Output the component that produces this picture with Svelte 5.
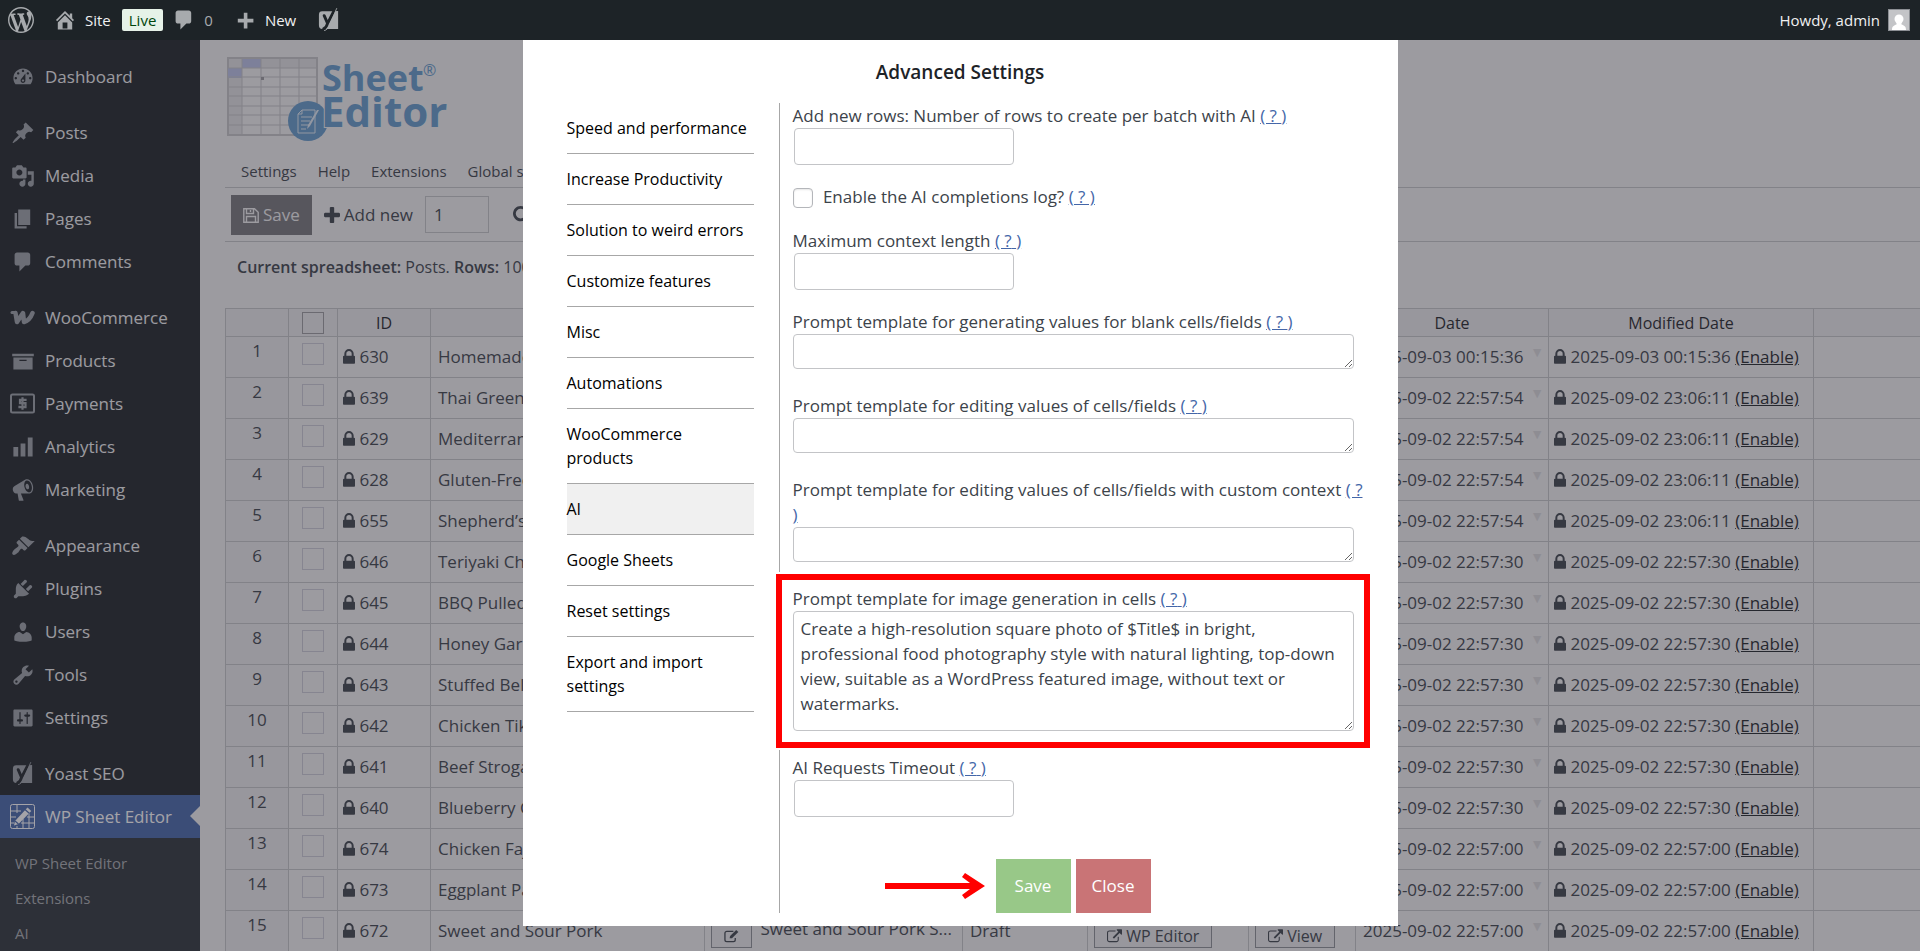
<script>
  const icons = {
    wordpress: 'M20 10c0-5.51-4.49-10-10-10C4.48 0 0 4.49 0 10c0 5.52 4.48 10 10 10 5.51 0 10-4.48 10-10zM7.78 15.37L4.37 6.22c.55-.02 1.17-.08 1.17-.08.5-.06.44-1.13-.06-1.11 0 0-1.45.11-2.37.11-.18 0-.37 0-.58-.01C4.12 2.69 6.87 1.11 10 1.11c2.33 0 4.45.87 6.05 2.34-.68-.11-1.65.39-1.65 1.58 0 .74.45 1.36.9 2.1.35.61.55 1.36.55 2.46 0 1.49-1.4 5-1.4 5l-3.03-8.37c.54-.02.82-.17.82-.17.5-.05.44-1.25-.06-1.22 0 0-1.44.12-2.38.12-.87 0-2.33-.12-2.33-.12-.5-.03-.56 1.2-.06 1.22l.92.08 1.26 3.41zM17.41 10c.24-.64.74-1.87.43-4.25.7 1.29 1.05 2.71 1.05 4.25 0 3.29-1.73 6.24-4.4 7.78.97-2.59 1.94-5.2 2.92-7.78zM6.1 18.09C3.12 16.65 1.11 13.53 1.11 10c0-1.3.23-2.48.72-3.59C3.25 10.3 4.67 14.2 6.1 18.09zm4.03-6.63l2.58 6.98c-.86.29-1.76.45-2.71.45-.79 0-1.57-.11-2.29-.33.81-2.38 1.62-4.74 2.42-7.1z',
    home: 'M16 8.5l1.53 1.53-1.06 1.06L10 4.6l-6.47 6.49-1.06-1.06L10 2.5l4 4v-2h2v4zm-6-2.46l6 5.99V18H4v-5.97zM12 17v-5H8v5h4z',
    comments: 'M5 2h9c1.1 0 2 .9 2 2v7c0 1.1-.9 2-2 2h-2l-5 5v-5H5c-1.1 0-2-.9-2-2V4c0-1.1.9-2 2-2z',
    plus: 'M17 9v3h-5v5H9v-5H4V9h5V4h3v5h5z',
    dashboard: 'M3.76 16h12.48c1.1-1.37 1.76-3.11 1.76-5 0-4.42-3.58-8-8-8s-8 3.58-8 8c0 1.89.66 3.63 1.76 5zM10 4c.55 0 1 .45 1 1s-.45 1-1 1-1-.45-1-1 .45-1 1-1zM6 6c.55 0 1 .45 1 1s-.45 1-1 1-1-.45-1-1 .45-1 1-1zm8 0c.55 0 1 .45 1 1s-.45 1-1 1-1-.45-1-1 .45-1 1-1zm-5.37 5.55L12 7v6c0 1.1-.9 2-2 2s-2-.9-2-2c0-.57.24-1.08.63-1.45zM4 10c.55 0 1 .45 1 1s-.45 1-1 1-1-.45-1-1 .45-1 1-1zm12 0c.55 0 1 .45 1 1s-.45 1-1 1-1-.45-1-1 .45-1 1-1zm-5 3c0-.55-.45-1-1-1s-1 .45-1 1 .45 1 1 1 1-.45 1-1z',
    post: 'M10.44 3.02l1.82-1.82 6.36 6.35-1.83 1.82c-1.05-.68-2.48-.57-3.41.36l-.75.75c-.92.93-1.04 2.35-.35 3.41l-1.83 1.82-2.41-2.41-2.8 2.79c-.42.42-3.38 2.71-3.8 2.29s1.86-3.39 2.28-3.81l2.79-2.79L4.1 9.36l1.83-1.82c1.05.69 2.48.57 3.4-.36l.75-.75c.93-.92 1.05-2.35.36-3.41z',
    media: 'M13 11V4c0-.55-.45-1-1-1h-1.67L9 1H5L3.67 3H2c-.55 0-1 .45-1 1v7c0 .55.45 1 1 1h10c.55 0 1-.45 1-1zM7 4.5c1.38 0 2.5 1.12 2.5 2.5S8.38 9.5 7 9.5 4.5 8.38 4.5 7 5.62 4.5 7 4.5zM14 6h5v10.5c0 1.38-1.12 2.5-2.5 2.5S14 17.88 14 16.5s1.12-2.5 2.5-2.5c.17 0 .34.02.5.05V9h-3V6zm-4 8.05V13h2v3.5c0 1.38-1.12 2.5-2.5 2.5S7 17.88 7 16.5 8.12 14 9.5 14c.17 0 .34.02.5.05z',
    page: 'M6 15V2h10v13H6zm-1 1h8v2H3V5h2v11z',
    archive: 'M19 4v2H1V4h18zM2 7h16v10H2V7zm11 3V9H7v1h6z',
    chart: 'M18 18V2h-4v16h4zm-6 0V7H8v11h4zm-6 0v-8H2v8h4z',
    megaphone: 'M18.15 5.94c.46 1.62.38 3.22-.02 4.48-.42 1.28-1.26 2.18-2.3 2.48-.16.06-.26.06-.4.06-.06.02-.12.02-.18.02-.06.02-.14.02-.22.02h-6.8l2.22 5.5c.02.14-.06.26-.14.34-.08.1-.24.16-.34.16H6.95c-.1 0-.26-.06-.34-.16-.08-.08-.16-.2-.14-.34l-1-5.5H4.25l-.02-.02c-.5.06-1.08-.18-1.54-.62s-.88-1.08-1.06-1.88c-.24-.8-.2-1.56-.02-2.2.18-.62.58-1.08 1.06-1.3l.02-.02 9-5.4c.1-.06.18-.1.24-.16.06-.04.14-.08.24-.12.16-.08.28-.12.5-.18 1.04-.3 2.24.1 3.22.98s1.84 2.24 2.26 3.86zm-2.58 5.98h-.02c.4-.1.74-.34 1.04-.7.58-.7.86-1.76.86-3.04 0-.64-.1-1.3-.28-1.98-.34-1.36-1.02-2.5-1.78-3.24s-1.68-1.1-2.46-.88c-.82.22-1.4.96-1.7 2-.32 1.04-.28 2.36.06 3.72.38 1.36 1 2.5 1.8 3.24.78.74 1.62 1.1 2.48.88zm-2.54-7.08c.22-.04.42-.02.62.04.38.16.76.48 1.02 1s.42 1.2.42 1.78c0 .3-.04.56-.12.8-.18.48-.44.84-.86.94-.34.1-.8-.06-1.14-.4s-.64-.86-.78-1.5c-.18-.62-.12-1.24.02-1.72s.48-.84.82-.94z',
    appearance: 'M14.48 11.06L7.41 3.99l1.5-1.5c.5-.56 2.3-.47 3.51.32 1.21.8 1.43 1.28 2.91 2.1 1.18.64 2.45 1.26 4.45.85zm-.71.71L6.7 4.7 4.93 6.47c-.39.39-.39 1.02 0 1.41l1.06 1.06c.39.39.39 1.03 0 1.42-.6.6-1.43 1.11-2.21 1.69-.35.26-.7.53-1.01.84C1.43 14.23.4 16.08 1.4 17.07c.99 1 2.84-.03 4.18-1.36.31-.31.58-.66.85-1.02.57-.78 1.08-1.61 1.69-2.21.39-.39 1.02-.39 1.41 0l1.06 1.06c.39.39 1.02.39 1.41 0z',
    plugins: 'M13.11 4.36L9.87 7.6 8 5.73l3.24-3.24c.35-.34 1.05-.2 1.56.32.52.51.66 1.21.31 1.55zm-8 1.77l.91-1.12 9.01 9.01-1.19.84c-.71.71-2.63 1.16-3.82 1.16H6.14L4.9 17.26c-.59.59-1.54.59-2.12 0-.59-.58-.59-1.53 0-2.12l1.24-1.24v-3.88c0-1.13.4-3.19 1.09-3.89zm7.26 3.97l3.24-3.24c.34-.35 1.04-.21 1.55.31.52.51.66 1.21.31 1.55l-3.24 3.25z',
    users: 'M10 9.25c-2.27 0-2.73-3.44-2.73-3.44C7 4.02 7.82 2 9.97 2c2.16 0 2.98 2.02 2.71 3.81 0 0-.41 3.44-2.68 3.44zm0 2.57L12.72 10c2.39 0 4.52 2.33 4.52 4.53v2.49s-3.65 1.13-7.24 1.13c-3.65 0-7.24-1.13-7.24-1.13v-2.49c0-2.25 1.94-4.48 4.47-4.48z',
    tools: 'M16.68 9.77c-1.34 1.34-3.3 1.67-4.95.99l-5.41 6.52c-.99.99-2.59.99-3.58 0s-.99-2.59 0-3.57l6.52-5.42c-.68-1.65-.35-3.61.99-4.95 1.28-1.28 3.12-1.62 4.72-1.06l-2.89 2.89 2.82 2.82 2.86-2.87c.53 1.58.18 3.39-1.08 4.65zM3.81 16.21c.4.39 1.04.39 1.43 0 .4-.4.4-1.04 0-1.43-.39-.4-1.03-.4-1.43 0-.39.39-.39 1.03 0 1.43z',
    settings: 'M18 16V4c0-.55-.45-1-1-1H3c-.55 0-1 .45-1 1v12c0 .55.45 1 1 1h14c.55 0 1-.45 1-1zM8 11h1c.55 0 1 .45 1 1s-.45 1-1 1H8v1.5c0 .28-.22.5-.5.5s-.5-.22-.5-.5V13H6c-.55 0-1-.45-1-1s.45-1 1-1h1V5.5c0-.28.22-.5.5-.5s.5.22.5.5V11zm5-2h-1c-.55 0-1-.45-1-1s.45-1 1-1h1V5.5c0-.28.22-.5.5-.5s.5.22.5.5V7h1c.55 0 1 .45 1 1s-.45 1-1 1h-1v5.5c0 .28-.22.5-.5.5s-.5-.22-.5-.5V9z'
  }

  const menuGroups = [
    [['Dashboard', 'dashboard']],
    [['Posts', 'post'], ['Media', 'media'], ['Pages', 'page'], ['Comments', 'comments']],
    [['WooCommerce', 'woo'], ['Products', 'archive'], ['Payments', 'payments'], ['Analytics', 'chart'], ['Marketing', 'megaphone']],
    [['Appearance', 'appearance'], ['Plugins', 'plugins'], ['Users', 'users'], ['Tools', 'tools'], ['Settings', 'settings']],
    [['Yoast SEO', 'yoast'], ['WP Sheet Editor', 'sheet']]
  ]
  const submenu = ['WP Sheet Editor', 'Extensions', 'AI']

  const tabs = [
    'Speed and performance', 'Increase Productivity', 'Solution to weird errors', 'Customize features',
    'Misc', 'Automations', 'WooCommerce products', 'AI', 'Google Sheets', 'Reset settings',
    'Export and import settings'
  ]
  let activeTab = $state('AI')

  const fields = [
    { id: 'batch', type: 'text', label: 'Add new rows: Number of rows to create per batch with AI' },
    { id: 'log', type: 'check', label: 'Enable the AI completions log?' },
    { id: 'context', type: 'text', label: 'Maximum context length' },
    { id: 'blank', type: 'area', label: 'Prompt template for generating values for blank cells/fields' },
    { id: 'edit', type: 'area', label: 'Prompt template for editing values of cells/fields' },
    { id: 'custom', type: 'area', label: 'Prompt template for editing values of cells/fields with custom context', long: true },
    { id: 'image', type: 'area', label: 'Prompt template for image generation in cells', marked: true },
    { id: 'timeout', type: 'text', label: 'AI Requests Timeout' }
  ]
  let values = $state({
    image: 'Create a high-resolution square photo of $Title$ in bright, professional food photography style with natural lighting, top-down view, suitable as a WordPress featured image, without text or watermarks.'
  })

  const a = ['2025-09-02 22:57:54', '2025-09-02 23:06:11']
  const b = ['2025-09-02 22:57:30', '2025-09-02 22:57:30']
  const c = ['2025-09-02 22:57:00', '2025-09-02 22:57:00']
  const rows = [
    [630, 'Homemade Pizza', ['2025-09-03 00:15:36', '2025-09-03 00:15:36']],
    [639, 'Thai Green Curry', a],
    [629, 'Mediterranean Salad', a],
    [628, 'Gluten-Free Bread', a],
    [655, 'Shepherd’s Pie', a],
    [646, 'Teriyaki Chicken', b],
    [645, 'BBQ Pulled Pork', b],
    [644, 'Honey Garlic Salmon', b],
    [643, 'Stuffed Bell Peppers', b],
    [642, 'Chicken Tikka', b],
    [641, 'Beef Stroganoff', b],
    [640, 'Blueberry Cake', b],
    [674, 'Chicken Fajitas', c],
    [673, 'Eggplant Parmesan', c],
    [672, 'Sweet and Sour Pork', c]
  ]
</script>

{#snippet icon(name)}
  {#if name === 'woo'}
    <svg class="icon wide" viewBox="0 0 25 25" fill="none" stroke="currentColor" stroke-linejoin="round" stroke-linecap="round">
      <path d="M2 7.500h3" stroke-width="3" /><path d="M5.500 8l1.500 9L13 8l1 9c4-1 7-5 8.500-9" stroke-width="4.500" />
    </svg>
  {:else if name === 'payments'}
    <svg class="icon wide" viewBox="0 0 25 25" fill="none" stroke="currentColor" stroke-width="2">
      <rect x="1" y="3.500" width="23" height="18" rx="1.500" />
      <path d="M15.500 10V8.800H10v3.400h5.500v3.900H9.500v-1.300M12.500 6.300v12.400" stroke-width="2.200" />
    </svg>
  {:else if name === 'yoast'}
    <svg class="icon" viewBox="0 0 22 25" stroke-linecap="round">
      <path d="M4 3.500h11l5.500-.5v19H4a4 4 0 0 1-3.500-4V7A3.500 3.500 0 0 1 4 3.500z" fill="currentColor" />
      <path d="M6 8l3.500 8L17 1.500M9.500 16c-1 3.500-2 5-4 5.500" fill="none" stroke="#1d2327" stroke-width="3" />
      <path d="M19 .5L11.800 17c-1.500 4-3 6-5.500 6.500" fill="none" stroke="currentColor" stroke-width=".9" />
    </svg>
  {:else if name === 'sheet'}
    <svg class="icon wide" viewBox="0 0 25 25" fill="none" stroke="currentColor" stroke-width="1">
      <rect x=".5" y=".5" width="24" height="24" rx="2" />
      <path d="M1 7h10M1 13h5M17 13h7M1 19h3M11 19h13M7 1v8M13 15v9M19 9v15M7 22v2" />
      <path d="M4 21.500l1-4.500L17.500 3.500l3.800 3.500L8.500 20z" fill="currentColor" stroke="none" />
      <path d="M15 5.500l4.500 4M5 17l3.500 3" stroke="#4466a8" stroke-width="1.200" />
    </svg>
  {:else}
    <svg class="icon" viewBox="0 0 20 20" fill="currentColor"><path fill-rule="evenodd" d={icons[name]} /></svg>
  {/if}
{/snippet}

{#snippet lock()}
  <svg class="lock" viewBox="0 0 1152 1536" fill="currentColor"><path d="M320 640h512v-192q0-106-75-181t-181-75-181 75-75 181v192zm832 96v576q0 40-28 68t-68 28h-960q-40 0-68-28t-28-68v-576q0-40 28-68t68-28h32v-192q0-184 132-316t316-132 316 132 132 316v192h32q40 0 68 28t28 68z" /></svg>
{/snippet}

{#snippet external()}
  <svg class="ext" viewBox="0 0 1792 1600" fill="currentColor"><path d="M1408 928v320q0 119-84.500 203.500t-203.500 84.500h-832q-119 0-203.500-84.500t-84.500-203.500v-832q0-119 84.500-203.500t203.500-84.500h704q14 0 23 9t9 23v64q0 14-9 23t-23 9h-704q-66 0-113 47t-47 113v832q0 66 47 113t113 47h832q66 0 113-47t47-113v-320q0-14 9-23t23-9h64q14 0 23 9t9 23zm384-864v512q0 26-19 45t-45 19-45-19l-176-176-652 652q-10 10-23 10t-23-10l-114-114q-10-10-10-23t10-23l652-652-176-176q-19-19-19-45t19-45 45-19h512q26 0 45 19t19 45z" /></svg>
{/snippet}

<div class="app">
  <header class="adminbar">
    <a class="wp" href="#about" aria-label="About WordPress">{@render icon('wordpress')}</a>
    <a class="site" href="#site">{@render icon('home')}<span>Site</span></a>
    <span class="live">Live</span>
    <a class="count" href="#comments">{@render icon('comments')}<span>0</span></a>
    <a class="new" href="#new">{@render icon('plus')}<span>New</span></a>
    <a class="seo" href="#seo" aria-label="SEO">{@render icon('yoast')}</a>
    <a class="user" href="#profile">
      <span>Howdy, admin</span>
      <svg class="avatar" viewBox="0 0 22 22">
        <rect width="22" height="22" fill="#8c8f94" /><rect x="1" y="1" width="20" height="20" fill="#c3c4c7" />
        <circle cx="11" cy="10" r="4.500" fill="#fff" /><path d="M4 21c0-4 2-4.500 4.500-5.500V13h5v2.500c2.500 1 4.500 1.500 4.500 5.500z" fill="#fff" />
      </svg>
    </a>
  </header>

  <div class="body">
    <nav class="sidebar">
      {#each menuGroups as group}
        <div class="group">
          {#each group as [name, glyph]}
            <a class="item" class:current={glyph === 'sheet'} href="#menu">
              <span class="slot">{@render icon(glyph)}</span>{name}
            </a>
          {/each}
        </div>
      {/each}
      <div class="submenu">
        {#each submenu as name}
          <a href="#sub">{name}</a>
        {/each}
      </div>
    </nav>

    <main class="content">
      <svg class="logo" viewBox="0 0 224 84" role="img" aria-label="Sheet Editor">
        <rect x="1" y="1" width="89" height="77" fill="none" stroke="#c4c4c6" stroke-width="2" />
        <rect x="2" y="2" width="13" height="75" fill="#e0e0e2" />
        <rect x="15" y="2" width="74" height="9" fill="#e0e0e2" />
        <rect x="15" y="2" width="19" height="9" fill="#b9c0e6" />
        <rect x="1" y="11" width="14" height="10" fill="#b9c0e6" />
        <path d="M15 1v77M34 1v77M53 1v77M72 1v77M1 11h89M1 20h89M1 30h89M1 39h89M1 49h89M1 58h89M1 68h89" stroke="#c4c4c6" />
        <rect x="34" y="20" width="3" height="3" fill="#9a9a9e" />
        <circle cx="81" cy="64" r="20" fill="#6299c9" />
        <path d="M75 53h13v23H71V57zM75 53v4h-4M74 60h11M74 64h9M74 68h8M74 72h5" fill="none" stroke="#dfeaf4" />
        <path d="M92 53l-9 16-3 3 1-4 9-15z" fill="#dfeaf4" />
        <g fill="#6299c9" font-family="Open Sans, sans-serif" font-weight="700">
          <text x="95" y="34" font-size="36">Sheet</text>
          <text x="94" y="70" font-size="42" stroke="#f0f0f1" stroke-width="2" paint-order="stroke">Editor</text>
          <text x="196" y="19" font-size="16" font-weight="400">®</text>
        </g>
      </svg>

      <div class="menubar">
        <a href="#settings">Settings</a>
        <a href="#help">Help</a>
        <a href="#extensions">Extensions</a>
        <a href="#sort">Global sort</a>
      </div>

      <div class="toolbar">
        <button class="save-rows" type="button">
          <svg viewBox="0 0 16 16" fill="none" stroke="currentColor" stroke-width="1.400"><path d="M.8 1.800h10.700l3.700 3.500v9.900H.8zM3.500 2v4.500h7V2M7.500 3v2M3.500 15v-5.500h9V15" /></svg>
          Save
        </button>
        <button class="add" type="button">
          <svg viewBox="192 128 1408 1408" fill="currentColor"><path d="M1600 736v192q0 40-28 68t-68 28h-416v416q0 40-28 68t-68 28h-192q-40 0-68-28t-28-68v-416h-416q-40 0-68-28t-28-68v-192q0-40 28-68t68-28h416v-416q0-40 28-68t68-28h192q40 0 68 28t28 68v416h416q40 0 68 28t28 68z" /></svg>
          Add new
        </button>
        <input class="amount" type="text" value="1" aria-label="Number of rows" />
        <button class="find" type="button" aria-label="Search">
          <svg viewBox="64 128 1664 1664" fill="currentColor"><path d="M1216 832q0-185-131.500-316.500t-316.500-131.500-316.500 131.500-131.500 316.500 131.500 316.500 316.500 131.500 316.500-131.500 131.500-316.500zm512 832q0 52-38 90t-90 38q-54 0-90-38l-343-342q-179 124-399 124-143 0-273.500-55.500t-225-150-150-225-55.500-273.500 55.500-273.500 150-225 225-150 273.500-55.500 273.500 55.500 225 150 150 225 55.500 273.500q0 220-124 399l343 343q37 37 37 90z" /></svg>
        </button>
      </div>

      <p class="info"><b>Current spreadsheet:</b> Posts. <b>Rows:</b> 100</p>

      <table>
        <colgroup>
          <col style="width:63px" /><col style="width:49px" /><col style="width:93px" /><col style="width:274px" />
          <col style="width:258px" /><col style="width:125px" /><col style="width:161px" /><col style="width:107px" />
          <col style="width:193px" /><col style="width:265px" /><col />
        </colgroup>
        <thead>
          <tr>
            <th></th>
            <th><input type="checkbox" aria-label="Select all" /></th>
            <th>ID</th><th>Title</th><th>Content</th><th>Status</th><th>WP Editor</th><th>View</th>
            <th>Date</th><th>Modified Date</th><th></th>
          </tr>
        </thead>
        <tbody>
          {#each rows as [id, title, dates], i}
            <tr>
              <td class="num">{i + 1}</td>
              <td class="tick"><input type="checkbox" aria-label="Select {id}" /></td>
              <td class="locked">{@render lock()} {id}</td>
              <td>{title}</td>
              <td class="with-btn">
                <button type="button" class="cell-btn" aria-label="Edit">
                  <svg class="ext" viewBox="0 0 16 14" fill="none" stroke="currentColor" stroke-width="1.400"><path d="M10 2H3a2 2 0 0 0-2 2v7a2 2 0 0 0 2 2h7a2 2 0 0 0 2-2V9" /><path d="M6 9.500l.5-2.500L13 .5 15.300 2.800 8.500 9.500z" fill="currentColor" stroke="none" /></svg>
                </button>
                {title} S...
              </td>
              <td>Draft</td>
              <td class="with-btn"><button type="button" class="cell-btn">{@render external()} WP Editor</button></td>
              <td class="with-btn"><button type="button" class="cell-btn">{@render external()} View</button></td>
              <td><span class="caret">▼</span>{dates[0]}</td>
              <td class="locked">{@render lock()} {dates[1]} <a href="#enable">(Enable)</a></td>
              <td></td>
            </tr>
          {/each}
        </tbody>
      </table>
    </main>

    <div class="overlay">
      <div class="modal" role="dialog" aria-labelledby="modal-title">
        <h2 id="modal-title">Advanced Settings</h2>
        <div class="panes">
          <div class="tabs">
            {#each tabs as tab}
              <button type="button" class:active={tab === activeTab} onclick={() => (activeTab = tab)}>{tab}</button>
            {/each}
          </div>
          <form class="fields" onsubmit={(e) => e.preventDefault()}>
            {#each fields as f (f.id)}
              <div class="field" class:marked={f.marked}>
                {#if f.type === 'check'}
                  <input id={f.id} type="checkbox" />
                  <label for={f.id}>{f.label}</label> <a class="help" href="#help">( ? )</a>
                {:else}
                  <div class="caption">
                    <label for={f.id}>{f.label}</label>
                    <a class="help" href="#help">( ?{#if f.long}<br />{:else}&nbsp;{/if})</a>
                  </div>
                  {#if f.type === 'area'}
                    <textarea id={f.id} class:tall={f.marked} bind:value={values[f.id]}></textarea>
                  {:else}
                    <input id={f.id} type="text" bind:value={values[f.id]} />
                  {/if}
                {/if}
              </div>
            {/each}
            <div class="actions">
              <svg class="arrow" viewBox="0 0 100 26" aria-hidden="true">
                <path d="M0 10h85L77 4l3-4 20 13-20 13-3-4 8-6H0z" fill="#f00" />
              </svg>
              <button type="submit" class="save">Save</button>
              <button type="button" class="close">Close</button>
            </div>
          </form>
        </div>
      </div>
    </div>
  </div>
</div>

<style>
  :global(body) { background: #f0f0f1; }
  .app {
    height: 100vh;
    display: flex;
    flex-direction: column;
    overflow: hidden;
    font-family: "Open Sans", "Noto Sans", sans-serif;
    font-size: 17px;
    line-height: 24px;
    color: #3c434a;
  }
  .app *, .app *::before { box-sizing: border-box; }
  a { color: inherit; text-decoration: none; }
  button, input, textarea { font: inherit; color: inherit; margin: 0; }
  button { cursor: pointer; }
  .icon { width: 24px; height: 24px; flex-shrink: 0; display: block; }
  .icon.wide { width: 25px; height: 25px; }

  .adminbar {
    display: flex;
    align-items: center;
    height: 40px;
    flex-shrink: 0;
    padding: 0 10px 0 8px;
    background: #1d2327;
    color: #f0f0f1;
    font-size: 15px;
  }
  .adminbar a { display: flex; align-items: center; gap: 8px; }
  .adminbar .icon { color: #a7aaad; }
  .wp .icon { width: 26px; height: 26px; }
  .site { margin-left: 19px; }
  .live {
    margin: 0 9px 0 11px;
    padding: 0 7px;
    line-height: 22px;
    border-radius: 2px;
    background: #e6f2e8;
    color: #00450c;
  }
  .count { color: #a7aaad; }
  .new { margin-left: 20px; }
  .seo { margin-left: 21px; }
  .user { margin-left: auto; }
  .avatar { width: 22px; height: 22px; }

  .body { flex: 1; display: flex; min-height: 0; position: relative; }

  .sidebar {
    width: 200px;
    flex-shrink: 0;
    display: flex;
    flex-direction: column;
    gap: 13px;
    padding-top: 15px;
    background: #1d2327;
    color: #f0f0f1;
    overflow: hidden;
  }
  .item { display: flex; align-items: center; height: 43px; position: relative; }
  .slot { width: 45px; display: flex; justify-content: center; color: #9ca1a7; }
  .current { background: #4466a8; color: #fff; }
  .current .slot { color: #fff; }
  .current::before {
    content: '';
    position: absolute;
    right: 0;
    top: 11px;
    border: 10px solid transparent;
    border-left-width: 0;
    border-right-color: #f0f0f1;
  }
  .submenu {
    flex: 1;
    margin-top: -13px;
    padding: 8px 15px;
    background: #2c3338;
    color: #a7aaad;
    font-size: 15px;
  }
  .submenu a { display: block; line-height: 35px; }

  .content { flex: 1; min-width: 0; padding: 17px 0 0 25px; overflow: hidden; }
  .logo { display: block; width: 224px; height: 84px; margin-left: 2px; overflow: visible; }
  .menubar {
    display: flex;
    gap: 21px;
    padding: 18px 16px 4px;
    border-bottom: 1px solid #c3c4c7;
    font-size: 15px;
  }
  .toolbar {
    display: flex;
    align-items: center;
    height: 54px;
    padding-left: 6px;
    border-bottom: 1px solid #c3c4c7;
  }
  .toolbar button { display: flex; align-items: center; gap: 4px; height: 40px; padding: 0 12px; border: 0; background: none; }
  .toolbar svg { width: 16px; height: 16px; }
  .toolbar .save-rows { background: #77767a; color: #f0f0f1; }
  .amount {
    width: 64px;
    height: 37px;
    padding: 0 8px;
    border: 1px solid #c3c4c7;
    background: transparent;
  }
  .toolbar .find { padding: 0; margin-left: 24px; }
  .toolbar .find svg { width: 18px; height: 18px; }
  .info { margin: 13px 0 29px 12px; font-size: 16px; white-space: nowrap; }
  b { font-weight: 600; }

  table { width: 100%; table-layout: fixed; border-collapse: collapse; }
  th, td { border: 1px solid #c3c4c7; padding: 0 7px; white-space: nowrap; overflow: hidden; }
  th:last-child, td:last-child { border-right: 0; }
  th { height: 28px; padding-top: 0; font-weight: 400; font-size: 16px; color: #1d2327; background: #e9e9eb; }
  td { height: 41px; }
  .num { text-align: center; vertical-align: top; padding-top: 2px; background: #e9e9eb; }
  .tick { vertical-align: top; padding: 6px 0 0; text-align: center; }
  th input, .tick input {
    appearance: none;
    width: 22px;
    height: 22px;
    border: 1px solid #c9c9d4;
    display: block;
    margin: 0 auto;
  }
  th input { border-color: #9a9a9e; margin-left: 6px; }
  .locked { padding-left: 5px; }
  .locked a { text-decoration: underline; color: #1d2327; }
  .lock { width: 12px; height: 16px; vertical-align: -2px; }
  .ext { width: 15px; height: 14px; vertical-align: -1px; }
  .cell-btn {
    height: 24px;
    padding: 0 12px;
    border: 1px solid #8c8f94;
    background: #e9e9eb;
    font-size: 16px;
    line-height: 20px;
    vertical-align: -7px;
    margin-right: 4px;
  }
  .with-btn { padding: 3px 0 0 6px; }
  .caret { float: right; font-size: 14px; line-height: 14px; color: #d8d8da; margin-right: -3px; }

  .overlay {
    position: absolute;
    inset: 0;
    display: flex;
    justify-content: center;
    align-items: flex-start;
    background: rgba(48, 46, 58, 0.44);
  }
  .modal { width: 875px; max-width: 100%; padding: 20px 44px 13px; background: #fff; }
  h2 { margin: 0 0 19px; font-size: 19px; line-height: 24px; font-weight: 600; text-align: center; color: #1d2327; }
  .panes { display: flex; gap: 25px; }
  .tabs { width: 187px; flex-shrink: 0; font-size: 16px; }
  .tabs button {
    display: block;
    width: 100%;
    padding: 13px 3px 13px 0;
    border: 0;
    border-bottom: 1px solid #a7a7a7;
    background: none;
    color: #000;
    text-align: left;
  }
  .tabs .active { background: #f0f0f0; }
  .fields { flex: 1; min-width: 0; padding-left: 13px; border-left: 1px solid #a7a7a7; }
  .field { position: relative; line-height: 25px; margin-bottom: 19px; }
  .caption { white-space: nowrap; }
  .help { color: #4466a8; text-decoration: underline; }
  .field input[type='text'] {
    display: block;
    width: 220px;
    height: 37px;
    margin-left: 1px;
    border: 1px solid #c3c4c7;
    border-radius: 4px;
    padding: 0 8px;
  }
  .field input[type='checkbox'] {
    appearance: none;
    width: 20px;
    height: 20px;
    margin-right: 6px;
    border: 1px solid #b4b6ba;
    border-radius: 4px;
    box-shadow: inset 0 1px 2px rgba(0, 0, 0, 0.1);
    vertical-align: middle;
  }
  textarea {
    display: block;
    width: 100%;
    height: 35px;
    margin-bottom: 24px;
    padding: 4px 7px;
    border: 1px solid #c3c4c7;
    border-radius: 4px;
    background: #fff;
    line-height: 25px;
    resize: vertical;
    overflow: hidden;
  }
  textarea.tall { height: 120px; }
  .marked::before {
    content: '';
    position: absolute;
    inset: -12px -16px -17px -17px;
    border: 6px solid #f00;
    outline: 2px solid #fff;
    pointer-events: none;
  }
  .actions { position: relative; display: flex; justify-content: center; gap: 5px; padding-top: 23px; }
  .actions button { width: 75px; height: 54px; padding: 0; border: 0; color: #fff; }
  .actions .save { background: #98c888; }
  .actions .close { background: #c97476; }
  .arrow { position: absolute; left: 92px; bottom: 14px; width: 100px; height: 26px; }
</style>
